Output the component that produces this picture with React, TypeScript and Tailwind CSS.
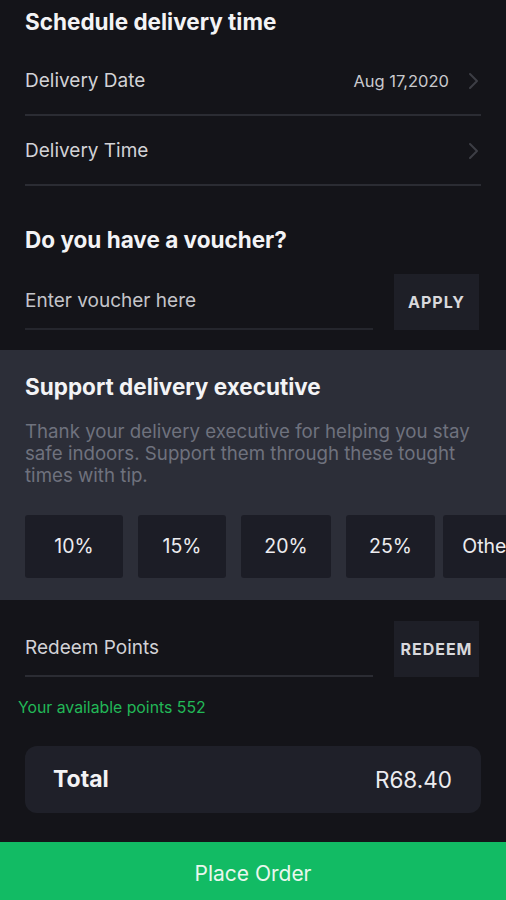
const tips = [
  { label: "10%", w: "w-[98px]", ml: "" },
  { label: "15%", w: "w-[88px]", ml: "ml-[15px]" },
  { label: "20%", w: "w-[90px]", ml: "ml-[15px]" },
  { label: "25%", w: "w-[89px]", ml: "ml-[15px]" },
  { label: "Other", w: "w-[90px]", ml: "ml-[8px]" },
];

function Chevron() {
  return (
    <svg width="12" height="18" viewBox="0 0 12 18" fill="none" className="text-[#3d3e45]">
      <path d="M3 2l7 7-7 7" stroke="currentColor" strokeWidth="2" strokeLinecap="round" strokeLinejoin="round" />
    </svg>
  );
}

function SideButton({ label }: { label: string }) {
  return (
    <button className="flex h-[56px] w-[85px] shrink-0 items-center justify-center bg-[#1e1f27] text-[16px] font-bold tracking-[0.06em] text-[#d8d8dc]">
      {label}
    </button>
  );
}

export default function App() {
  return (
    <div className="flex h-[900px] w-[506px] flex-col overflow-hidden bg-[#141419] font-['Inter',sans-serif] text-white">
      {/* schedule */}
      <section className="px-[25px] pt-[8px]">
        <h2 className="text-[22.5px] font-bold leading-[28px] text-[#f3f3f5]">Schedule delivery time</h2>
        <div className="mt-[10px] flex h-[70px] items-center justify-between border-b-2 border-[#2b2c33] pt-[2px]">
          <span className="text-[19px] text-[#d2d2d6]">Delivery Date</span>
          <div className="flex items-center gap-[18px] pr-[2px]">
            <span className="text-[16.5px] text-[#c9c9cd]">Aug 17,2020</span>
            <Chevron />
          </div>
        </div>
        <div className="flex h-[70px] items-center justify-between border-b-2 border-[#2b2c33] pt-[2px]">
          <span className="text-[19px] text-[#d2d2d6]">Delivery Time</span>
          <div className="pr-[2px]">
            <Chevron />
          </div>
        </div>
      </section>

      {/* voucher */}
      <section className="px-[25px] pt-[40px]">
        <h2 className="text-[22.5px] font-bold leading-[28px] text-[#f3f3f5]">Do you have a voucher?</h2>
        <div className="mt-[20px] flex items-end gap-[21px] pr-[2px]">
          <div className="flex h-[55px] flex-1 items-center border-b-2 border-[#25262d] text-[19px] text-[#c4c4c9]">
            Enter voucher here
          </div>
          <SideButton label="APPLY" />
        </div>
      </section>

      {/* tip */}
      <section className="mt-[20px] bg-[#2c2e38] pb-[22px] pl-[25px] pt-[23px]">
        <h2 className="text-[22.5px] font-bold leading-[28px] text-[#f3f3f5]">Support delivery executive</h2>
        <p className="mt-[20px] pr-[20px] text-[18.7px] leading-[22px] text-[#6f727e]">
          Thank your delivery executive for helping you stay safe indoors. Support them through these tought times with tip.
        </p>
        <div className="mt-[28px] flex">
          {tips.map((t) => (
            <button
              key={t.label}
              className={`${t.w} ${t.ml} flex h-[63px] shrink-0 items-center justify-center rounded-[3px] bg-[#1c1d26] text-[19.5px] text-[#ececef]`}
            >
              {t.label}
            </button>
          ))}
        </div>
      </section>

      {/* redeem */}
      <section className="px-[25px] pt-[21px]">
        <div className="flex items-end gap-[21px] pr-[2px]">
          <div className="flex h-[55px] flex-1 items-center border-b-2 border-[#2b2c33] text-[19px] text-[#d2d2d6]">
            Redeem Points
          </div>
          <SideButton label="REDEEM" />
        </div>
      </section>
      <p className="mt-[21px] pl-[18px] text-[15.8px] leading-[20px] text-[#22b857]">Your available points 552</p>

      <div className="mx-[25px] mt-[28px] flex h-[67px] items-center justify-between rounded-[12px] bg-[#1f2029] pl-[28px] pr-[29px]">
        <span className="text-[23px] font-bold text-[#f3f3f5]">Total</span>
        <span className="text-[22.5px] text-[#ececef]">R68.40</span>
      </div>

      <button className="mt-auto flex h-[58px] w-full items-center justify-center bg-[#12bb64] pt-[5px] text-[21px] text-[#e9f7ee]">
        Place Order
      </button>
    </div>
  );
}
